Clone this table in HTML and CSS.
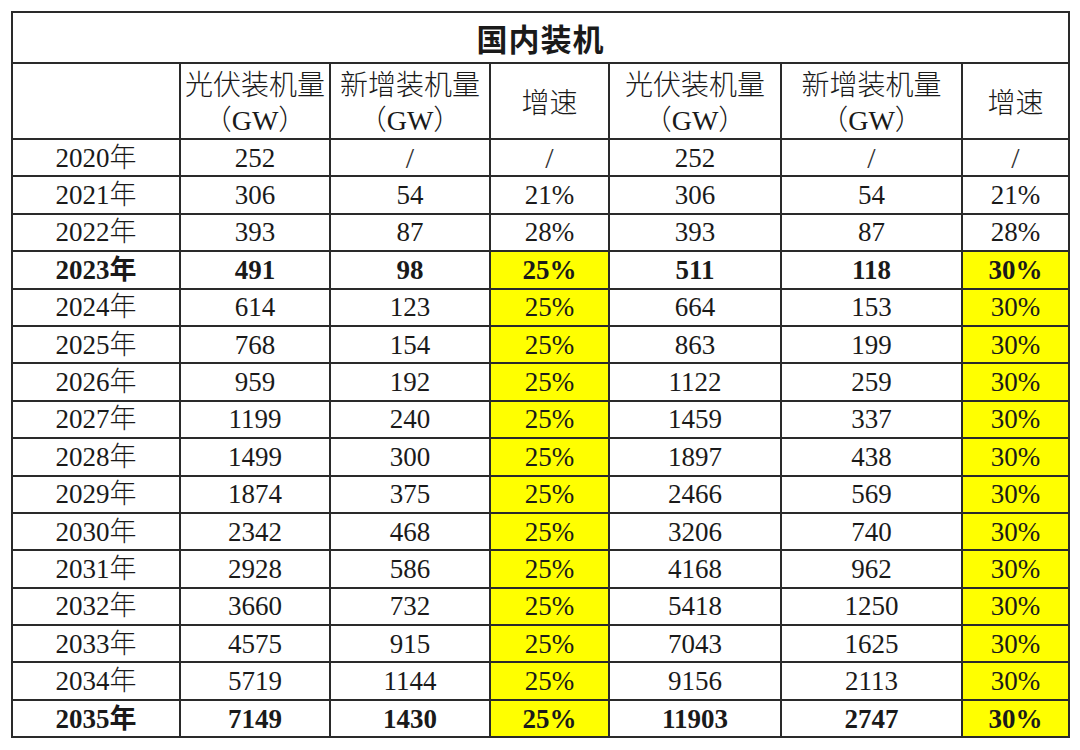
FILE: index.html
```html
<!DOCTYPE html>
<html lang="zh-CN">
<head>
<meta charset="utf-8">
<title>国内装机</title>
<link rel="stylesheet" href="styles.css">
</head>
<body>
<table class="grid">
  <colgroup>
    <col class="c-year"><col class="c-a"><col class="c-b"><col class="c-c"><col class="c-d"><col class="c-e"><col class="c-f">
  </colgroup>
  <thead>
    <tr class="title-row"><th colspan="7">国内装机</th></tr>
    <tr class="head-row">
      <th></th>
      <th>光伏装机量<br>（GW）</th>
      <th>新增装机量<br>（GW）</th>
      <th>增速</th>
      <th>光伏装机量<br>（GW）</th>
      <th>新增装机量<br>（GW）</th>
      <th>增速</th>
    </tr>
  </thead>
  <tbody>
    <tr><td>2020年</td><td>252</td><td class="sl">/</td><td class="sl">/</td><td>252</td><td class="sl">/</td><td class="sl">/</td></tr>
    <tr><td>2021年</td><td>306</td><td>54</td><td>21%</td><td>306</td><td>54</td><td>21%</td></tr>
    <tr><td>2022年</td><td>393</td><td>87</td><td>28%</td><td>393</td><td>87</td><td>28%</td></tr>
    <tr class="bold"><td>2023年</td><td>491</td><td>98</td><td class="hl">25%</td><td>511</td><td>118</td><td class="hl">30%</td></tr>
    <tr><td>2024年</td><td>614</td><td>123</td><td class="hl">25%</td><td>664</td><td>153</td><td class="hl">30%</td></tr>
    <tr><td>2025年</td><td>768</td><td>154</td><td class="hl">25%</td><td>863</td><td>199</td><td class="hl">30%</td></tr>
    <tr><td>2026年</td><td>959</td><td>192</td><td class="hl">25%</td><td>1122</td><td>259</td><td class="hl">30%</td></tr>
    <tr><td>2027年</td><td>1199</td><td>240</td><td class="hl">25%</td><td>1459</td><td>337</td><td class="hl">30%</td></tr>
    <tr><td>2028年</td><td>1499</td><td>300</td><td class="hl">25%</td><td>1897</td><td>438</td><td class="hl">30%</td></tr>
    <tr><td>2029年</td><td>1874</td><td>375</td><td class="hl">25%</td><td>2466</td><td>569</td><td class="hl">30%</td></tr>
    <tr><td>2030年</td><td>2342</td><td>468</td><td class="hl">25%</td><td>3206</td><td>740</td><td class="hl">30%</td></tr>
    <tr><td>2031年</td><td>2928</td><td>586</td><td class="hl">25%</td><td>4168</td><td>962</td><td class="hl">30%</td></tr>
    <tr><td>2032年</td><td>3660</td><td>732</td><td class="hl">25%</td><td>5418</td><td>1250</td><td class="hl">30%</td></tr>
    <tr><td>2033年</td><td>4575</td><td>915</td><td class="hl">25%</td><td>7043</td><td>1625</td><td class="hl">30%</td></tr>
    <tr><td>2034年</td><td>5719</td><td>1144</td><td class="hl">25%</td><td>9156</td><td>2113</td><td class="hl">30%</td></tr>
    <tr class="bold"><td>2035年</td><td>7149</td><td>1430</td><td class="hl">25%</td><td>11903</td><td>2747</td><td class="hl">30%</td></tr>
  </tbody>
</table>
</body>
</html>
```
FILE: styles.css
```css
html, body {
  margin: 0;
  padding: 0;
  background: #ffffff;
}

body {
  padding: 11px 0 0 11px;
  font-family: "Liberation Serif", "Noto Sans CJK SC", serif;
  color: #1a1a1a;
}

.grid {
  border-collapse: collapse;
  table-layout: fixed;
  width: 1057px;
}

.c-year { width: 168px; }
.c-a { width: 150px; }
.c-b { width: 160px; }
.c-c { width: 119px; }
.c-d { width: 172px; }
.c-e { width: 181px; }
.c-f { width: 107px; }

.grid th,
.grid td {
  border: 2px solid #2a2a2a;
  padding: 0;
  text-align: center;
  vertical-align: middle;
  font-weight: 300;
  font-size: 27px;
}

.title-row th {
  height: 49px;
  font-size: 31px;
  font-weight: 700;
  letter-spacing: 1px;
}

.head-row th {
  height: 70px;
  padding-top: 4px;
  line-height: 35px;
  font-size: 28px;
}

.grid td {
  height: 35.4px;
  line-height: 30px;
}

.grid .sl {
  font-size: 30px;
  color: #333333;
}

.grid .bold td {
  font-weight: 700;
}

.grid .hl {
  background: #ffff00;
}
```
